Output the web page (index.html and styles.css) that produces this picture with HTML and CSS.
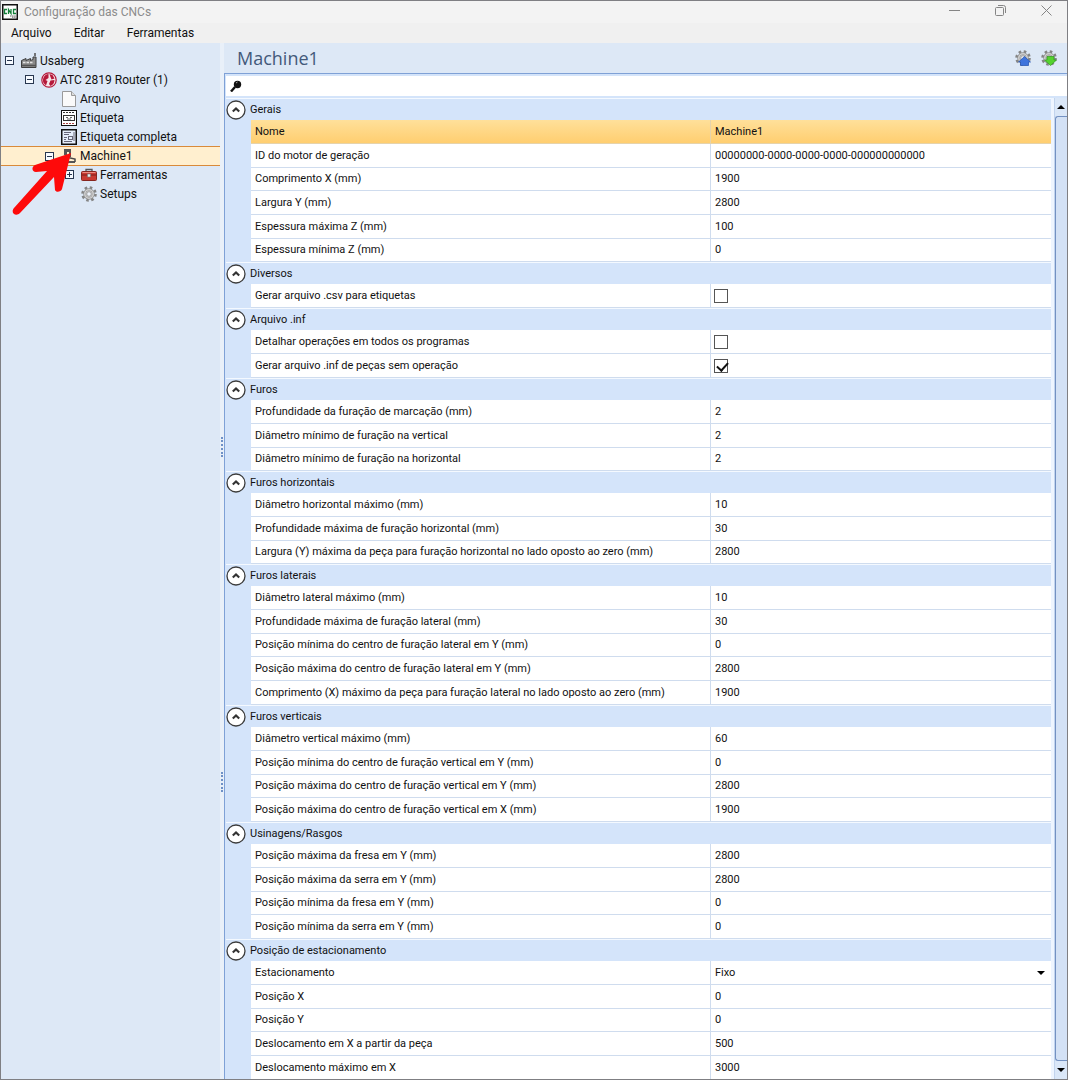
FILE: index.html
```html
<!DOCTYPE html>
<html lang="pt-BR">
<head>
<meta charset="utf-8">
<title>Configuração das CNCs</title>
<link rel="stylesheet" href="styles.css">
</head>
<body>
<svg class="defs" aria-hidden="true">
  <symbol id="chevron" viewBox="0 0 20 20"><circle cx="10" cy="10" r="9" fill="#fff" stroke="#3c3c3c" stroke-width="1.3"/><path d="M6.8 11.6 10 8.4l3.2 3.2" fill="none" stroke="#333" stroke-width="2.1"/></symbol>
  <symbol id="minus" viewBox="0 0 9 9"><rect x=".5" y=".5" width="8" height="8" fill="#f6faff" stroke="#27364f"/><path d="M2 4.5h5" stroke="#27364f"/></symbol>
  <symbol id="plus" viewBox="0 0 9 9"><rect x=".5" y=".5" width="8" height="8" fill="#f6faff" stroke="#27364f"/><path d="M2 4.5h5M4.500 2v5" stroke="#27364f"/></symbol>
  <symbol id="cog" viewBox="0 0 16 16"><circle cx="8" cy="8" r="6.500" fill="none" stroke="#858585" stroke-width="2.600" stroke-dasharray="2.550 2.550"/><circle cx="8" cy="8" r="4.300" fill="#e4e4e4" stroke="#8b8b8b" stroke-width="2.800"/><circle cx="8" cy="8" r="4.200" fill="none" stroke="#d0d0d0" stroke-width="1.600"/><circle cx="8" cy="8" r="2.300" fill="#eef3fb" stroke="#8b8b8b" stroke-width=".8"/></symbol>
</svg>
<div class="window">
  <header class="titlebar">
    <svg class="app-icon" viewBox="0 0 16 16"><rect x=".75" y=".75" width="14.500" height="14.500" fill="#fff" stroke="#111" stroke-width="1.500"/><path d="M5 5.500H2.500v4H5M6.500 10V5.500L9 9.500V5M14 5.500h-2.500v4H14" fill="none" stroke="#14803a" stroke-width="1.300"/><path d="M8 12h6M10 13.500h4" stroke="#999" stroke-width="1.400" stroke-dasharray="1.500 .6"/></svg>
    <h1 class="app-title">Configuração das CNCs</h1>
    <div class="win-buttons">
      <button aria-label="Minimizar"><svg viewBox="0 0 11 11"><path d="M0 5.500h11"/></svg></button>
      <button aria-label="Restaurar"><svg viewBox="0 0 11 11"><rect x=".5" y="2.500" width="8" height="8" rx="1"/><path d="M3 .5h5.500a2 2 0 0 1 2 2V8"/></svg></button>
      <button aria-label="Fechar"><svg viewBox="0 0 11 11"><path d="m.5.5 10 10M10.500.5l-10 10"/></svg></button>
    </div>
  </header>
  <nav class="menubar">
    <button>Arquivo</button><button>Editar</button><button>Ferramentas</button>
  </nav>
  <div class="content">
    <aside class="sidebar">
      <ul class="tree">
        <li><div class="node"><button class="expander" aria-label="Recolher"><svg viewBox="0 0 9 9"><use href="#minus"/></svg></button>
          <svg class="icon" viewBox="0 0 16 16"><path d="M.5 7.500 5 5.500v2l4.500-2v2l2.500-1V4h3v10.500H.5z" fill="#8a8a8a" stroke="#3f3f3f"/><path d="M2 9.500h10" stroke="#e4e4e4" stroke-width="1.500" stroke-dasharray="2.500 1"/><path d="M1 12.500h14" stroke="#555" stroke-width="1.500"/><path d="M14 0v3" stroke="#4c4c4c" stroke-width="1.500"/></svg><span>Usaberg</span></div>
          <ul>
            <li><div class="node"><button class="expander" aria-label="Recolher"><svg viewBox="0 0 9 9"><use href="#minus"/></svg></button>
              <svg class="icon" viewBox="0 0 16 16"><circle cx="8" cy="8" r="7.200" fill="#f6e6ea" stroke="#b5183a" stroke-width="1.200"/><path d="M7.500 2C3 2.500 1 7 2.500 11L5 13.500 6.500 9 4.500 8l3-2zM8.500 2l3 1 2 3.500-3 1L9.500 5zM9.500 8.500l4-.5c0 3-1.500 5-4 6L8 12z" fill="#b5183a"/></svg><span>ATC 2819 Router (1)</span></div>
              <ul>
                <li><div class="node"><i class="expander"></i><svg class="icon" viewBox="0 0 16 16"><path d="M1.500.5h9l4 4v11h-13z" fill="#fafafa" stroke="#9a9a9a"/><path d="M10.500.5v4h4" fill="#ddd" stroke="#9a9a9a"/></svg><span>Arquivo</span></div></li>
                <li><div class="node"><i class="expander"></i><svg class="icon" viewBox="0 0 16 16"><rect x=".5" y=".5" width="15" height="15" fill="#fff" stroke="#111"/><path d="M2 2.500h12" stroke="#333" stroke-dasharray="2 1"/><path d="M2 13.500h12" stroke="#a44" stroke-dasharray="2 1"/><rect x="2.500" y="5.500" width="11" height="5" fill="none" stroke="#333"/><path d="M5 7.500h2M9 7.500h2M6 9h4" stroke="#666"/></svg><span>Etiqueta</span></div></li>
                <li><div class="node"><i class="expander"></i><svg class="icon" viewBox="0 0 16 16"><rect x=".75" y=".75" width="14.500" height="14.500" fill="#e5eefb" stroke="#111" stroke-width="1.500"/><path d="M3 3.500h7M3 5.500h5M3 8.500h3M3 10.500h2M3 12.500h8M13 3v9" stroke="#667"/><rect x="7.500" y="7.500" width="4" height="3" fill="none" stroke="#667"/></svg><span>Etiqueta completa</span></div></li>
                <li><div class="node selected"><button class="expander" aria-label="Recolher"><svg viewBox="0 0 9 9"><use href="#minus"/></svg></button>
                  <svg class="icon" viewBox="0 0 16 16"><path d="M3 1h7v8H8V4H6v3H3zM5 13h9v2H3v-2z" fill="#555"/><path d="M7 9.500 14 11v3M5 12V7" fill="none" stroke="#4a4a4a" stroke-width="1.500"/></svg><span>Machine1</span></div>
                  <ul>
                    <li><div class="node"><button class="expander" aria-label="Expandir"><svg viewBox="0 0 9 9"><use href="#plus"/></svg></button>
                      <svg class="icon" viewBox="0 0 16 16"><path d="M5 5V2.500h6V5" fill="none" stroke="#555" stroke-width="1.300"/><rect x=".5" y="4.500" width="15" height="9" rx="1" fill="#c93a32" stroke="#872620"/><path d="M1 8h14" stroke="#7a1f1a"/><path d="M1.500 5.500h13" stroke="#ec8b80"/><rect x="6.500" y="7" width="3" height="3" fill="#eee" stroke="#777" stroke-width=".6"/></svg><span>Ferramentas</span></div></li>
                    <li><div class="node"><i class="expander"></i><svg class="icon" viewBox="0 0 16 16"><use href="#cog"/></svg><span>Setups</span></div></li>
                  </ul></li>
              </ul></li>
          </ul></li>
      </ul>
      <svg class="pointer" viewBox="0 0 62 68" aria-hidden="true"><path d="M60 4 24 16c-4 2-3 7 1 7l11-1L3 59c-4 5 2 9 6 5L43 28l1 13c1 3 6 2 7-1z" fill="#fe0a0a"/></svg>
    </aside>
    <div class="splitter"><i></i><i></i></div>
    <main class="main">
      <header class="page-head">
        <h2>Machine1</h2>
        <button aria-label="Exportar configuração"><svg viewBox="0 0 16 16"><use href="#cog"/><path d="m9.500 6.500 6 5.500h-2v3.500h-8V12h-2z" fill="#3f74dc" stroke="#214fae" stroke-width=".7"/></svg></button>
        <button aria-label="Importar configuração"><svg viewBox="0 0 16 16"><use href="#cog"/><path d="M9.500 15.500 3.500 10h2.500V6.500h7V10h2.500z" fill="#55d22e" stroke="#2f9a1c" stroke-width=".7"/></svg></button>
      </header>
      <div class="panel">
        <label class="search"><svg viewBox="0 0 12 12"><circle cx="7.500" cy="4.500" r="3.700" fill="#111"/><path d="M1 11.500 5 7" stroke="#111" stroke-width="2.400"/><path d="m6 3 1.500-1" stroke="#aaa"/></svg><input type="text" aria-label="Pesquisar"></label>
        <div class="scroller">
          <div class="viewport">
            <table class="props">
              <colgroup><col class="c-gutter"><col class="c-name"><col></colgroup>
              <tbody>
                <tr class="group"><th colspan="3"><button><svg viewBox="0 0 20 20"><use href="#chevron"/></svg>Gerais</button></th></tr>
                <tr class="current"><td></td><th>Nome</th><td>Machine1</td></tr>
                <tr><td></td><th>ID do motor de geração</th><td>00000000-0000-0000-0000-000000000000</td></tr>
                <tr><td></td><th>Comprimento X (mm)</th><td>1900</td></tr>
                <tr><td></td><th>Largura Y (mm)</th><td>2800</td></tr>
                <tr><td></td><th>Espessura máxima Z (mm)</th><td>100</td></tr>
                <tr><td></td><th>Espessura mínima Z (mm)</th><td>0</td></tr>
              </tbody>
              <tbody>
                <tr class="group"><th colspan="3"><button><svg viewBox="0 0 20 20"><use href="#chevron"/></svg>Diversos</button></th></tr>
                <tr><td></td><th><label for="csv">Gerar arquivo .csv para etiquetas</label></th><td><input type="checkbox" id="csv"></td></tr>
              </tbody>
              <tbody>
                <tr class="group"><th colspan="3"><button><svg viewBox="0 0 20 20"><use href="#chevron"/></svg>Arquivo .inf</button></th></tr>
                <tr><td></td><th><label for="det">Detalhar operações em todos os programas</label></th><td><input type="checkbox" id="det"></td></tr>
                <tr><td></td><th><label for="inf">Gerar arquivo .inf de peças sem operação</label></th><td><input type="checkbox" id="inf" checked></td></tr>
              </tbody>
              <tbody>
                <tr class="group"><th colspan="3"><button><svg viewBox="0 0 20 20"><use href="#chevron"/></svg>Furos</button></th></tr>
                <tr><td></td><th>Profundidade da furação de marcação (mm)</th><td>2</td></tr>
                <tr><td></td><th>Diâmetro mínimo de furação na vertical</th><td>2</td></tr>
                <tr><td></td><th>Diâmetro mínimo de furação na horizontal</th><td>2</td></tr>
              </tbody>
              <tbody>
                <tr class="group"><th colspan="3"><button><svg viewBox="0 0 20 20"><use href="#chevron"/></svg>Furos horizontais</button></th></tr>
                <tr><td></td><th>Diâmetro horizontal máximo (mm)</th><td>10</td></tr>
                <tr><td></td><th>Profundidade máxima de furação horizontal (mm)</th><td>30</td></tr>
                <tr><td></td><th>Largura (Y) máxima da peça para furação horizontal no lado oposto ao zero (mm)</th><td>2800</td></tr>
              </tbody>
              <tbody>
                <tr class="group"><th colspan="3"><button><svg viewBox="0 0 20 20"><use href="#chevron"/></svg>Furos laterais</button></th></tr>
                <tr><td></td><th>Diâmetro lateral máximo (mm)</th><td>10</td></tr>
                <tr><td></td><th>Profundidade máxima de furação lateral (mm)</th><td>30</td></tr>
                <tr><td></td><th>Posição mínima do centro de furação lateral em Y (mm)</th><td>0</td></tr>
                <tr><td></td><th>Posição máxima do centro de furação lateral em Y (mm)</th><td>2800</td></tr>
                <tr><td></td><th>Comprimento (X) máximo da peça para furação lateral no lado oposto ao zero (mm)</th><td>1900</td></tr>
              </tbody>
              <tbody>
                <tr class="group"><th colspan="3"><button><svg viewBox="0 0 20 20"><use href="#chevron"/></svg>Furos verticais</button></th></tr>
                <tr><td></td><th>Diâmetro vertical máximo (mm)</th><td>60</td></tr>
                <tr><td></td><th>Posição mínima do centro de furação vertical em Y (mm)</th><td>0</td></tr>
                <tr><td></td><th>Posição máxima do centro de furação vertical em Y (mm)</th><td>2800</td></tr>
                <tr><td></td><th>Posição máxima do centro de furação vertical em X (mm)</th><td>1900</td></tr>
              </tbody>
              <tbody>
                <tr class="group"><th colspan="3"><button><svg viewBox="0 0 20 20"><use href="#chevron"/></svg>Usinagens/Rasgos</button></th></tr>
                <tr><td></td><th>Posição máxima da fresa em Y (mm)</th><td>2800</td></tr>
                <tr><td></td><th>Posição máxima da serra em Y (mm)</th><td>2800</td></tr>
                <tr><td></td><th>Posição mínima da fresa em Y (mm)</th><td>0</td></tr>
                <tr><td></td><th>Posição mínima da serra em Y (mm)</th><td>0</td></tr>
              </tbody>
              <tbody>
                <tr class="group"><th colspan="3"><button><svg viewBox="0 0 20 20"><use href="#chevron"/></svg>Posição de estacionamento</button></th></tr>
                <tr><td></td><th><label for="park">Estacionamento</label></th><td><div class="select"><select id="park"><option>Fixo</option></select></div></td></tr>
                <tr><td></td><th>Posição X</th><td>0</td></tr>
                <tr><td></td><th>Posição Y</th><td>0</td></tr>
                <tr><td></td><th>Deslocamento em X a partir da peça</th><td>500</td></tr>
                <tr><td></td><th>Deslocamento máximo em X</th><td>3000</td></tr>
              </tbody>
            </table>
          </div>
          <div class="scrollbar">
            <button aria-label="Rolar para cima"><svg viewBox="0 0 8 4"><path d="M0 4 4 0l4 4z"/></svg></button>
            <div class="thumb"></div>
            <button aria-label="Rolar para baixo"><svg viewBox="0 0 8 4"><path d="m0 0 4 4 4-4z"/></svg></button>
          </div>
        </div>
      </div>
    </main>
  </div>
</div>
</body>
</html>
```
FILE: styles.css
```css
* { box-sizing: border-box; }
body {
  margin: 0;
  height: 100vh;
  padding: 0 3px 4px 0;
  background: #fff;
  color: #111;
  font: 12px/18px Roboto, "Open Sans", sans-serif;
  overflow: hidden;
}
button {
  border: 0;
  padding: 0;
  background: none;
  font: inherit;
  color: inherit;
  display: flex;
  align-items: center;
  justify-content: center;
}
h1, h2, ul { margin: 0; padding: 0; font-weight: 400; }
ul { list-style: none; }
.defs { display: none; }

.window {
  height: 100%;
  display: flex;
  flex-direction: column;
  border: 1px solid #7f7f83;
  background: #f0f0f0;
}
.titlebar {
  display: flex;
  align-items: center;
  height: 22px;
  padding-left: 1px;
  gap: 6px;
  background: #f3f3f3;
}
.app-icon { width: 16px; height: 16px; }
.app-title { flex: 1; font-size: 12px; color: #8c8c8c; }
.win-buttons { display: flex; gap: 4px; align-self: flex-start; }
.win-buttons button { width: 42px; height: 18px; }
.win-buttons svg { width: 11px; height: 11px; fill: none; stroke: #858585; }
.menubar { display: flex; gap: 22px; height: 20px; padding-left: 10px; }

.content { flex: 1; min-height: 0; display: flex; }
.sidebar { position: relative; width: 219px; background: #dde8f6; padding-top: 8px; }
.node {
  display: flex;
  align-items: center;
  height: 19px;
  padding-left: 4px;
  white-space: nowrap;
}
.node .icon { width: 16px; height: 16px; margin: 0 3px 0 7px; flex: none; }
.expander, .expander svg { width: 9px; height: 9px; flex: none; display: block; }
.tree ul .node { padding-left: 24px; }
.tree ul ul .node { padding-left: 44px; }
.tree ul ul ul .node { padding-left: 64px; }
.node.selected {
  height: 20px;
  margin-bottom: -1px;
  background: #ffefcf;
  border: solid #d98a3a;
  border-width: 1px 0;
}
.pointer { position: absolute; left: 10px; top: 106px; width: 62px; height: 68px; }
.splitter {
  width: 4px;
  background: #e9f0f9;
  display: flex;
  flex-direction: column;
  justify-content: center;
  gap: 315px;
  padding: 107px 0 0 1px;
}
.splitter i { height: 20px; border-left: 2px dotted #6f91c6; }

.main { flex: 1; min-width: 0; display: flex; flex-direction: column; }
.page-head {
  display: flex;
  align-items: center;
  gap: 10px;
  height: 30px;
  padding: 0 10px 0 13px;
  background: #dde8f6;
}
.page-head h2 { flex: 1; font: 18px/30px "Open Sans", sans-serif; color: #43597a; }
.page-head svg { width: 16px; height: 16px; display: block; }
.panel {
  flex: 1;
  min-height: 0;
  display: flex;
  flex-direction: column;
  padding: 2px 0 0 1px;
  border: solid #7fa1d6;
  border-width: 1px 0 0 1px;
  background: #d4e4fa;
}
.search { display: flex; align-items: center; height: 20px; padding-left: 4px; background: #fff; }
.search svg { width: 12px; height: 12px; }
.search input { flex: 1; border: 0; outline: 0; font: inherit; background: none; }
.scroller { flex: 1; min-height: 0; display: flex; padding-top: 2px; }
.viewport {
  flex: 1;
  overflow: hidden;
  border-right: 3px solid #eef5ff;
  font-size: 11px;
}

.props { width: 100%; table-layout: fixed; border-spacing: 0; }
.c-gutter { width: 25px; }
.c-name { width: 460px; }
.props th, .props td {
  padding: 0 4px;
  height: 24px;
  line-height: 20px;
  font-weight: 400;
  text-align: left;
  white-space: nowrap;
  background: #fff;
  border-bottom: 1px solid #cfdcee;
}
.props th { border-right: 1px solid #cfdcee; }
.props td:first-child { background: #d4e4fa; border-bottom-color: #d4e4fa; }
.props tr:nth-child(3n+1) > * { height: 23px; }
.props tr.group > th {
  height: 22px;
  padding: 0;
  background: #d4e4fa;
  border: 0;
  border-top: 1px solid #f4f9ff;
}
.props .group button { height: 21px; gap: 4px; }
.props .group svg { width: 20px; height: 20px; }
.props .current th, .props .current td:last-child {
  background: linear-gradient(#ffe09a, #ffce70);
  border-color: #e6d3ab;
}
.props input[type="checkbox"] {
  appearance: none;
  display: block;
  width: 14px;
  height: 14px;
  margin: 0;
  border: 1px solid #555;
  background: #fff;
}
.props td:has(> input) { padding-left: 3px; }
.props input:checked::before {
  content: "";
  display: block;
  width: 9px;
  height: 5px;
  margin: 2px 2px;
  border: solid #111;
  border-width: 0 0 2px 2px;
  transform: rotate(-48deg);
}
.select { display: flex; align-items: center; padding-right: 2px; }
.select select { flex: 1; appearance: none; border: 0; padding: 0; font: inherit; color: inherit; background: none; }
.select::after { content: ""; border: 4px solid transparent; border-top-color: #000; border-bottom: 0; }

.scrollbar {
  width: 13px;
  display: flex;
  flex-direction: column;
  border-left: 1px solid #c2d4ee;
  background: #dae7f8;
}
.scrollbar button { height: 18px; }
.scrollbar svg { width: 8px; height: 4px; }
.thumb { flex: 1; border: 1px solid #7391c2; border-right: 0; border-radius: 3px 0 0 3px; background: #d3e1f5; }
```
